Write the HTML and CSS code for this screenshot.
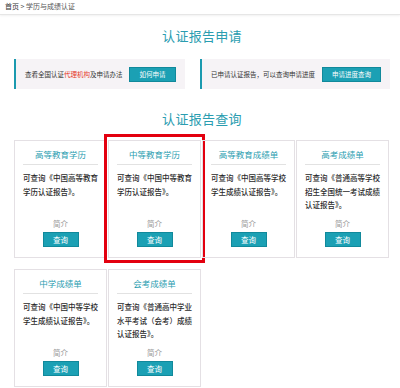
FILE: index.html
```html
<!DOCTYPE html>
<html lang="zh-CN">
<head>
<meta charset="utf-8">
<title>学历与成绩认证</title>
<link rel="stylesheet" href="styles.css">
</head>
<body>
<div class="crumb"><span class="home">首页</span> &gt; 学历与成绩认证</div>

<h2 class="sec-title first">认证报告申请</h2>
<div class="info-row">
  <div class="info-box">
    <span class="info-text">查看全国认证<span class="red">代理机构</span>及申请办法</span>
    <span class="btn info-btn narrow">如何申请</span>
  </div>
  <div class="info-box">
    <span class="info-text">已申请认证报告，可以查询申请进度</span>
    <span class="btn info-btn wide">申请进度查询</span>
  </div>
</div>

<h2 class="sec-title second">认证报告查询</h2>
<div class="cards">
  <div class="card">
    <div class="card-title">高等教育学历</div>
    <div class="card-body">可查询《中国高等教育学历认证报告》。</div>
    <div class="intro">简介</div>
    <span class="btn query">查询</span>
  </div>
  <div class="card marked">
    <div class="card-title">中等教育学历</div>
    <div class="card-body">可查询《中国中等教育学历认证报告》。</div>
    <div class="intro">简介</div>
    <span class="btn query">查询</span>
    <div class="red-frame"></div>
  </div>
  <div class="card">
    <div class="card-title">高等教育成绩单</div>
    <div class="card-body">可查询《中国高等学校学生成绩认证报告》。</div>
    <div class="intro">简介</div>
    <span class="btn query">查询</span>
  </div>
  <div class="card">
    <div class="card-title">高考成绩单</div>
    <div class="card-body">可查询《普通高等学校招生全国统一考试成绩认证报告》。</div>
    <div class="intro">简介</div>
    <span class="btn query">查询</span>
  </div>
  <div class="card">
    <div class="card-title">中学成绩单</div>
    <div class="card-body">可查询《中国中等学校学生成绩认证报告》。</div>
    <div class="intro">简介</div>
    <span class="btn query">查询</span>
  </div>
  <div class="card">
    <div class="card-title">会考成绩单</div>
    <div class="card-body">可查询《普通高中学业水平考试（会考）成绩认证报告》。</div>
    <div class="intro">简介</div>
    <span class="btn query">查询</span>
  </div>
</div>
</body>
</html>
```
FILE: styles.css
```css
html, body {
  margin: 0;
  padding: 0;
  overflow: hidden;
  background: #ffffff;
}
body {
  font-family: "Noto Sans CJK SC", "Noto Sans", sans-serif;
  color: #333;
  width: 400px;
}
.crumb {
  height: 14px;
  line-height: 12px;
  padding-left: 5px;
  font-size: 7px;
  color: #555;
  border-bottom: 1px solid #e6e6e6;
  box-shadow: 0 1px 2px rgba(0,0,0,0.06);
}
.crumb .home { color: #333; }

.sec-title {
  margin: 0;
  text-align: center;
  font-weight: normal;
  font-size: 13px;
  line-height: 18px;
  color: #2a9db0;
  letter-spacing: 0.3px;
  padding-left: 4px;
}
.sec-title.first { margin-top: 12px; }
.sec-title.second { margin-top: 21px; }

.info-row {
  display: grid;
  grid-template-columns: 171px 190px;
  column-gap: 15px;
  margin: 14px 0 0 14px;
}
.info-box {
  height: 30px;
  box-sizing: border-box;
  background: #f6f3f6;
  border-left: 2px solid #1b9aaf;
  display: flex;
  align-items: center;
  justify-content: space-between;
  padding: 0 9px 0 9px;
}
.info-text {
  font-size: 6.5px;
  color: #333;
  white-space: nowrap;
}
.red { color: #e53a2b; }

.btn {
  display: inline-block;
  background: #1ba0b4;
  border: 1px solid #11899b;
  box-sizing: border-box;
  color: #fff;
  text-align: center;
}
.info-btn {
  height: 15px;
  line-height: 13px;
  font-size: 6.5px;
}
.info-btn.narrow { width: 47px; }
.info-btn.wide { width: 59px; }

.cards {
  display: grid;
  grid-template-columns: repeat(4, 93px);
  column-gap: 1px;
  row-gap: 11px;
  margin: 12px 0 0 14px;
}
.card {
  position: relative;
  height: 118px;
  box-sizing: border-box;
  border: 1px solid #e4e0e4;
  padding: 7px 8px 0 8px;
  display: flex;
  flex-direction: column;
  align-items: center;
}
.card-title {
  align-self: stretch;
  text-align: center;
  font-size: 8.5px;
  line-height: 12px;
  color: #2a9db0;
  padding-bottom: 4px;
  border-bottom: 1px solid #e2e2e2;
}
.card-body {
  align-self: stretch;
  margin-top: 6px;
  height: 47px;
  font-size: 7.5px;
  line-height: 13.5px;
  color: #2a2a2a;
  font-weight: 500;
}
.intro {
  font-size: 7.5px;
  line-height: 12px;
  color: #999;
}
.query {
  margin-top: 2px;
  width: 36px;
  height: 15px;
  line-height: 13px;
  font-size: 7.5px;
}
.red-frame {
  position: absolute;
  top: -7px;
  left: -5px;
  right: -5px;
  bottom: -6px;
  border: 3px solid #e3000f;
  pointer-events: none;
}
```
